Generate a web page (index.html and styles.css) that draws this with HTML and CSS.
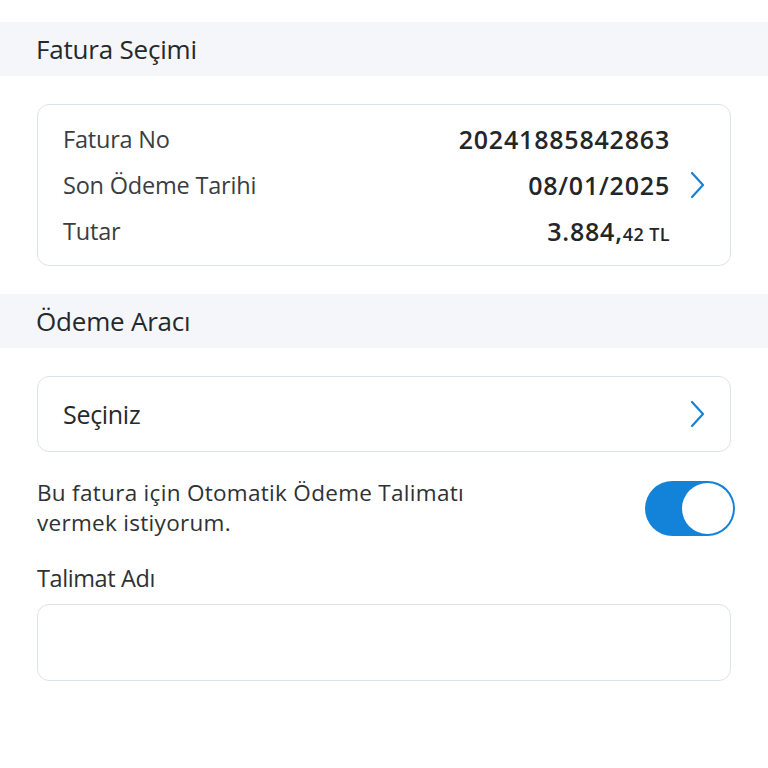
FILE: index.html
```html
<!DOCTYPE html>
<html lang="tr">
<head>
<meta charset="utf-8">
<link rel="stylesheet" href="styles.css">
</head>
<body>
<div class="page">
  <div class="topstrip"></div>
  <div class="band">Fatura Seçimi</div>
  <div class="section">
    <div class="card info">
      <div class="row"><span class="label">Fatura No</span><span class="value">20241885842863</span><span class="slot"></span></div>
      <div class="row"><span class="label">Son Ödeme Tarihi</span><span class="value">08/01/2025</span><span class="slot"><svg class="chev" viewBox="0 0 16 28" width="16" height="28"><polyline points="3,2 14,14 3,26" fill="none" stroke="#1a80d2" stroke-width="2.2" stroke-linecap="round" stroke-linejoin="round"/></svg></span></div>
      <div class="row"><span class="label">Tutar</span><span class="value">3.884,<small>42 TL</small></span><span class="slot"></span></div>
    </div>
  </div>
  <div class="band">Ödeme Aracı</div>
  <div class="section tight">
    <div class="card select">
      <span class="select-text">Seçiniz</span>
      <svg class="chev" viewBox="0 0 16 28" width="16" height="28"><polyline points="3,2 14,14 3,26" fill="none" stroke="#1a80d2" stroke-width="2.2" stroke-linecap="round" stroke-linejoin="round"/></svg>
    </div>
    <div class="toggle-row">
      <p class="toggle-text">Bu fatura için Otomatik Ödeme Talimatı<br>vermek istiyorum.</p>
      <div class="switch"><div class="thumb"></div></div>
    </div>
    <div class="field-label">Talimat Adı</div>
    <div class="card input"></div>
  </div>
</div>
</body>
</html>
```

FILE: styles.css
```css
* { box-sizing: border-box; }
html, body { margin: 0; padding: 0; background: #ffffff; }
body {
  font-family: "Open Sans", "Noto Sans", "DejaVu Sans", sans-serif;
  color: #2b2e31;
  width: 768px;
  height: 768px;
  overflow: hidden;
}
.topstrip { height: 22px; }
.band {
  height: 54px;
  background: #f5f6f9;
  display: flex;
  align-items: center;
  padding-left: 36px;
  font-size: 26px;
  letter-spacing: -0.2px;
  color: #26292c;
}
.section { padding: 28px 37px; }
.section.tight { padding-bottom: 0; }
.card {
  border: 1.5px solid #dde3ea;
  border-radius: 12px;
  background: #fff;
}
.info { padding: 11px 25px; }
.row {
  height: 46px;
  display: flex;
  align-items: center;
}
.label {
  flex: 1;
  font-size: 23.5px;
  color: #3a3d41;
  letter-spacing: -0.2px;
}
.value {
  font-size: 25px;
  font-weight: 600;
  color: #232629;
  letter-spacing: 0.8px;
}
.value small { font-size: 18px; font-weight: 600; letter-spacing: 0.4px; }
.slot {
  width: 35px;
  display: flex;
  justify-content: flex-end;
  align-items: center;
}
.chev { display: block; }
.select {
  height: 76px;
  display: flex;
  align-items: center;
  justify-content: space-between;
  padding: 0 25px;
}
.select-text { font-size: 25px; color: #26292c; letter-spacing: -0.3px; }
.toggle-row {
  margin-top: 26px;
  margin-right: -4px;
  display: flex;
  align-items: center;
  justify-content: space-between;
}
.toggle-text {
  margin: 0;
  font-size: 22.5px;
  line-height: 30px;
  color: #2e3134;
  letter-spacing: 0.3px;
}
.switch {
  width: 90px;
  height: 55px;
  border-radius: 28px;
  background: #1283d9;
  display: flex;
  align-items: center;
  justify-content: flex-end;
  padding: 2px;
}
.thumb {
  width: 51px;
  height: 51px;
  border-radius: 50%;
  background: #fff;
}
.field-label {
  margin-top: 25px;
  font-size: 23.5px;
  color: #2e3134;
  letter-spacing: -0.4px;
  height: 30px;
  line-height: 30px;
}
.input { margin-top: 11px; height: 77px; }
```
